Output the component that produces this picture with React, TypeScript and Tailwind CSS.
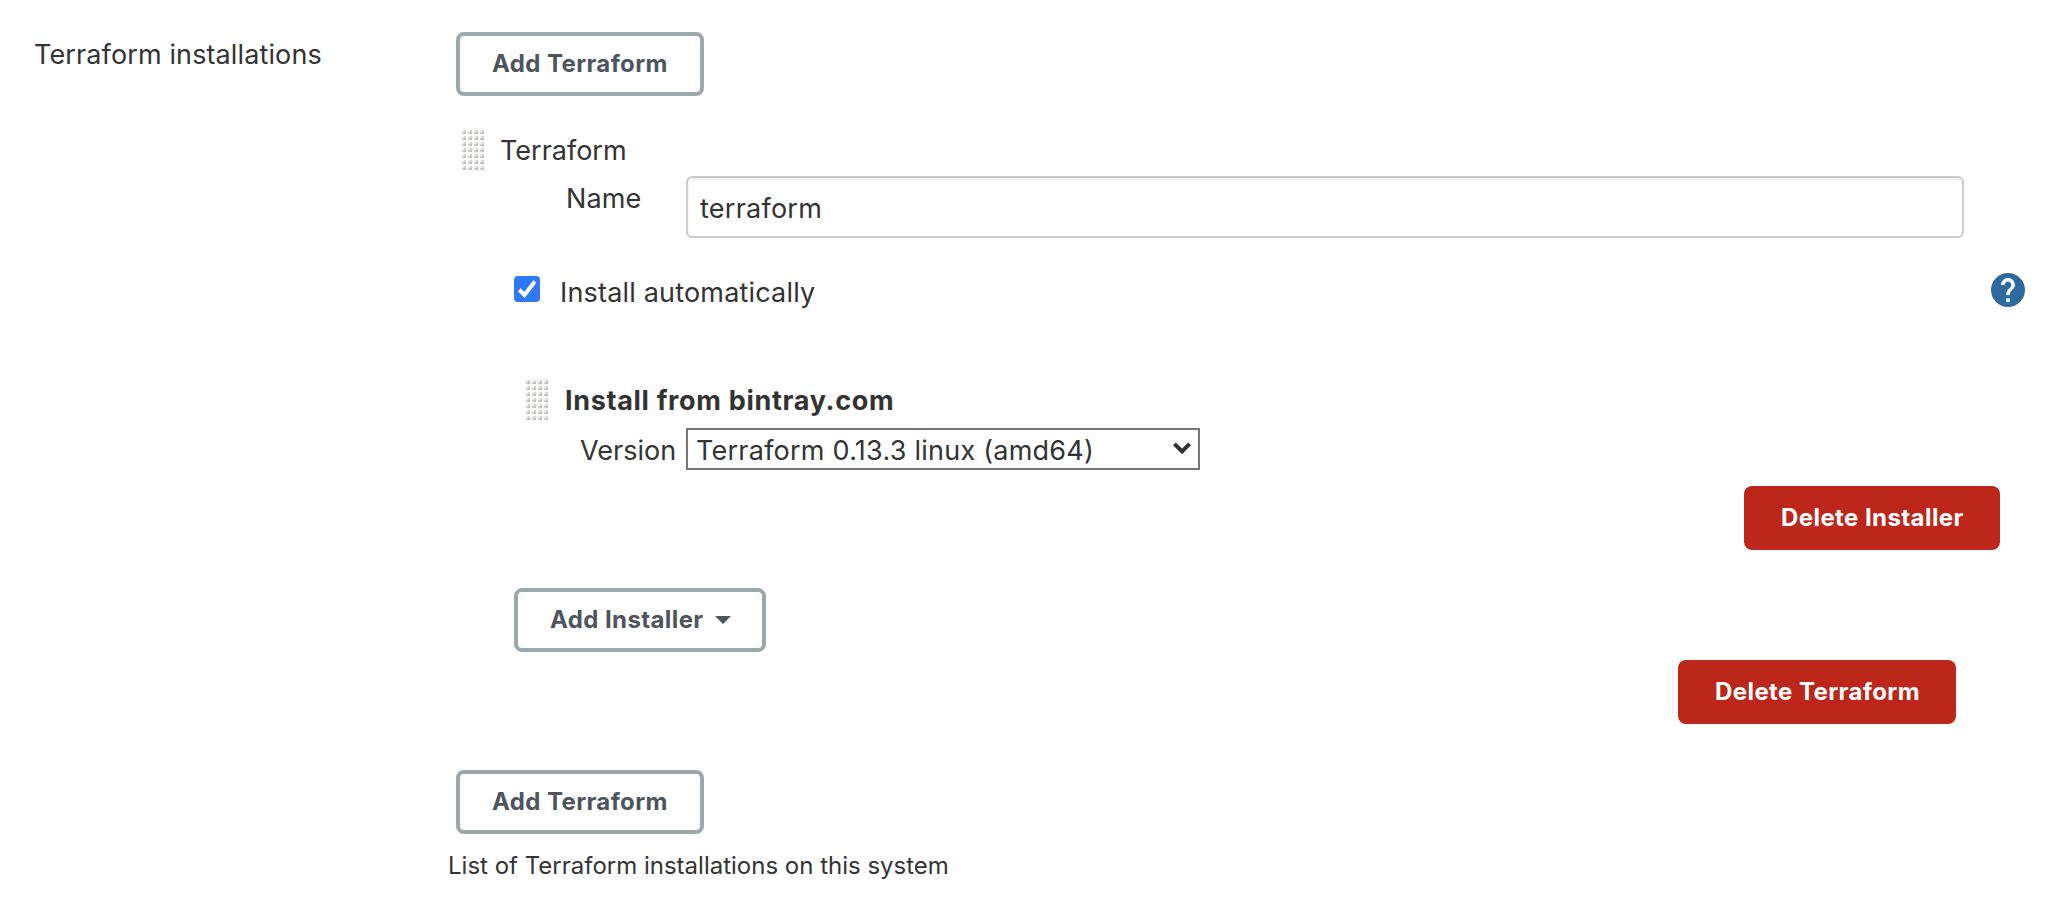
import type { ReactNode } from "react";

function Grip() {
  const cells: ReactNode[] = [];
  for (let row = 0; row < 7; row++) {
    for (let col = 0; col < 4; col++) {
      const x = col * 6;
      const y = row * 6 + 2;
      cells.push(
        <g key={`${row}-${col}`}>
          <rect x={x} y={y - 2} width="4" height="1" fill="#f3f3f3" />
          <rect x={x} y={y} width="2" height="2" fill="#eeeeed" />
          <rect x={x + 2} y={y} width="2" height="2" fill="#d6d6d4" />
          <rect x={x} y={y + 2} width="2" height="2" fill="#d2d2d0" />
          <rect x={x + 2} y={y + 2} width="2" height="2" fill="#bebebb" />
          <rect x={x + 4} y={y} width="2" height="4" fill="#f6f6f6" />
        </g>,
      );
    }
  }
  return (
    <svg width="22" height="42" viewBox="0 0 22 42" className="shrink-0">
      {cells}
    </svg>
  );
}

function OutlineButton({ width, children }: { width: string; children: ReactNode }) {
  return (
    <button
      type="button"
      className={`${width} flex h-16 items-center rounded-lg border-4 border-[#9da8ad] bg-white pl-8 text-[24px] leading-[28px] font-bold tracking-[0.4px] whitespace-nowrap text-[#4d545d]`}
    >
      {children}
    </button>
  );
}

function DangerButton({ width, children }: { width: string; children: ReactNode }) {
  return (
    <button
      type="button"
      className={`${width} flex h-16 items-center rounded-lg bg-[#bd261b] pl-[37px] text-[24px] leading-[28px] font-bold tracking-[0.42px] whitespace-nowrap text-white`}
    >
      {children}
    </button>
  );
}

export default function App() {
  return (
    <div className="flex h-[904px] w-[2054px] overflow-hidden bg-white font-['Inter',sans-serif] text-[27px] leading-8 text-[#333333]">
      <div className="w-[456px] shrink-0 pt-[39px] pl-[34px] tracking-[0.12px]">Terraform installations</div>

      <div className="flex w-[1598px] flex-col pt-8">
        <OutlineButton width="w-[248px]">Add Terraform</OutlineButton>

        <div className="mt-8 flex h-[42px] pl-1.5">
          <Grip />
          <span className="pt-[7px] pl-4">Terraform</span>
        </div>

        <div className="mt-1.5 flex h-[62px]">
          <label htmlFor="name" className="w-[230px] pt-[7px] pl-[110px] tracking-[0.1px]">
            Name
          </label>
          <input
            id="name"
            defaultValue="terraform"
            className="h-[62px] w-[1278px] rounded-md border-2 border-[#cccccc] bg-white pt-0.5 pl-3 tracking-[0.25px] shadow-[inset_0_2px_2px_rgba(0,0,0,0.075)] outline-none"
          />
        </div>

        <div className="mt-[35px] flex h-[35px] pl-[58px]">
          <svg width="26" height="26" viewBox="0 0 26 26" className="mt-[3px] shrink-0">
            <rect width="26" height="26" rx="4" fill="#2f78f8" />
            <path d="M5.3 13.8 L10.5 18.9 L20.9 5.6" fill="none" stroke="#ffffff" strokeWidth="4" />
          </svg>
          <span className="mt-1 ml-5 tracking-[0.18px]">Install automatically</span>
          <svg width="34" height="34" viewBox="2 2 20 20" className="mr-[29px] ml-auto shrink-0">
            <circle cx="12" cy="12" r="10" fill="#2e6a9e" />
            <path
              fill="#ffffff"
              stroke="#ffffff"
              strokeWidth="0.1"
              d="M13 19h-2v-2h2v2zm2.07-7.75l-.9.92C13.45 12.9 13 13.5 13 15h-2v-.5c0-1.1.45-2.1 1.17-2.83l1.24-1.26c.37-.36.59-.86.59-1.41 0-1.1-.9-2-2-2s-2 .9-2 2H8c0-2.21 1.79-4 4-4s4 1.79 4 4c0 .88-.36 1.68-.93 2.25z"
            />
          </svg>
        </div>

        <div className="mt-[70px] flex h-[42px] pl-[70px]">
          <Grip />
          <span className="pt-[7px] pl-[17px] font-bold tracking-[0.68px]">Install from bintray.com</span>
        </div>

        <div className="mt-2 flex h-[42px]">
          <span className="w-[230px] pt-[7px] pl-[124px]">Version</span>
          <div className="flex h-[42px] w-[514px] items-start justify-between border-2 border-[#767676] bg-white pt-[5px] pr-[7px] pl-2">
            <span className="tracking-[0.24px]">Terraform 0.13.3 linux (amd64)</span>
            <svg width="18" height="12" viewBox="0 0 18 12" className="mt-[7px]">
              <path d="M1.4 1.8 L9 9.4 L16.6 1.8" fill="none" stroke="#333333" strokeWidth="4" />
            </svg>
          </div>
        </div>

        <div className="mt-4 flex justify-end pr-[54px]">
          <DangerButton width="w-[256px]">Delete Installer</DangerButton>
        </div>

        <div className="mt-[38px] pl-[58px]">
          <OutlineButton width="w-[252px]">
            Add Installer
            <svg width="16" height="8" viewBox="0 0 16 8" className="ml-[11px]">
              <path d="M0 0H16L8 8Z" fill="#4d545d" />
            </svg>
          </OutlineButton>
        </div>

        <div className="mt-2 flex justify-end pr-[98px]">
          <DangerButton width="w-[278px]">Delete Terraform</DangerButton>
        </div>

        <div className="mt-[46px]">
          <OutlineButton width="w-[248px]">Add Terraform</OutlineButton>
        </div>

        <p className="mt-[18px] -ml-2 text-[24px] leading-[28px]">
          List of Terraform installations on this system
        </p>
      </div>
    </div>
  );
}
